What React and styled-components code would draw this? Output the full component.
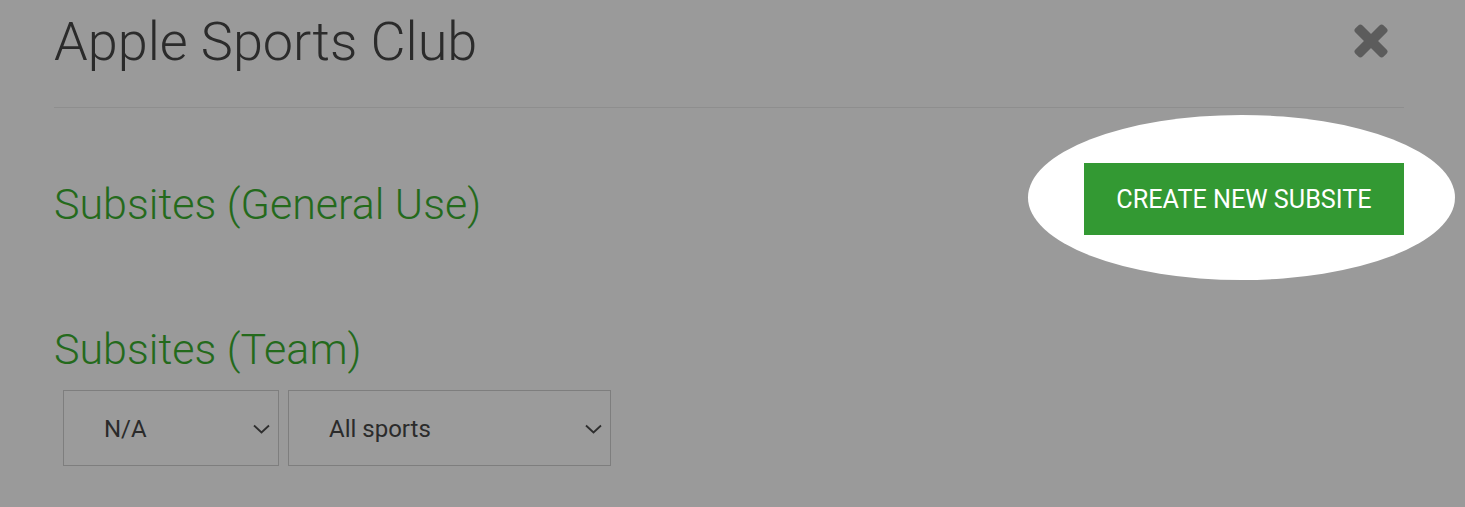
import React from "react";
import styled, { createGlobalStyle } from "styled-components";

const GlobalStyle = createGlobalStyle`
    body {
        margin: 0;
        background-color: #9a9a9a;
        font-family: Roboto, "Liberation Sans", Arial, sans-serif;
    }
`;

function CloseIcon() {
    return <svg width="34" height="34" viewBox="0 0 34 34">
        <g fill="#5c5c5c">
            <rect x="-3" y="12" width="40" height="10" rx="3" transform="rotate(45 17 17)" />
            <rect x="-3" y="12" width="40" height="10" rx="3" transform="rotate(-45 17 17)" />
        </g>
    </svg>;
}

function Chevron() {
    return <svg width="17" height="10" viewBox="0 0 17 10">
        <polyline points="1,1.5 8.5,8.5 16,1.5" fill="none" stroke="#2e2e2e" strokeWidth="1.8" />
    </svg>;
}

function App() {
    return <>
        <GlobalStyle />
        <Modal>
            <Header>
                <Title>Apple Sports Club</Title>
                <CloseButton><CloseIcon /></CloseButton>
            </Header>

            <SectionRow>
                <SectionTitle offset={10}>Subsites (General Use)</SectionTitle>
                <Highlight>
                    <CreateButton>CREATE NEW SUBSITE</CreateButton>
                </Highlight>
            </SectionRow>

            <TeamSection>
                <SectionTitle>Subsites (Team)</SectionTitle>
                <Filters>
                    <Select width={216}>
                        <span>N/A</span>
                        <Chevron />
                    </Select>
                    <Select width={323}>
                        <span>All sports</span>
                        <Chevron />
                    </Select>
                </Filters>
            </TeamSection>
        </Modal>
    </>;
}

const Modal = styled.div`
    width: 1350px;
    margin-left: 54px;
`;
const Header = styled.div`
    display: flex;
    justify-content: space-between;
    align-items: flex-start;
    height: 107px;
    border-bottom: 1px solid #8e8e8e;
`;
const Title = styled.h1`
    margin: 10px 0 0 0;
    font-size: 54px;
    font-weight: 300;
    line-height: 64px;
    color: #2b2b2b;
`;
const CloseButton = styled.div`
    margin: 24px 16px 0 0;
    line-height: 0;
`;
const SectionRow = styled.div`
    display: flex;
    justify-content: space-between;
    align-items: center;
    margin-top: 55px;
`;
const SectionTitle = styled.h2`
    margin: ${p => p.offset || 0}px 0 0 0;
    font-size: 43px;
    font-weight: 300;
    line-height: 50px;
    color: #246a1c;
`;
const Highlight = styled.div`
    position: relative;
    &::before {
        content: "";
        position: absolute;
        left: 50%;
        top: 50%;
        width: 427px;
        height: 165px;
        margin-left: -216px;
        margin-top: -84px;
        border-radius: 50%;
        background-color: #ffffff;
    }
`;
const CreateButton = styled.button`
    position: relative;
    width: 320px;
    height: 72px;
    border: none;
    background-color: #339933;
    color: #ffffff;
    font-family: Roboto, "Liberation Sans", Arial, sans-serif;
    font-size: 25.2px;
    font-weight: 400;
    padding: 0;
`;
const TeamSection = styled.div`
    margin-top: 89px;
`;
const Filters = styled.div`
    display: flex;
    gap: 9px;
    margin: 16px 0 0 9px;
`;
const Select = styled.div`
    box-sizing: border-box;
    width: ${p => p.width}px;
    height: 76px;
    display: flex;
    align-items: center;
    justify-content: space-between;
    padding: 2px 8px 0 40px;
    border: 1px solid #7e7e7e;
    background-color: #9b9b9b;
    font-size: 24px;
    color: #2b2b2b;
`;

export default App;
